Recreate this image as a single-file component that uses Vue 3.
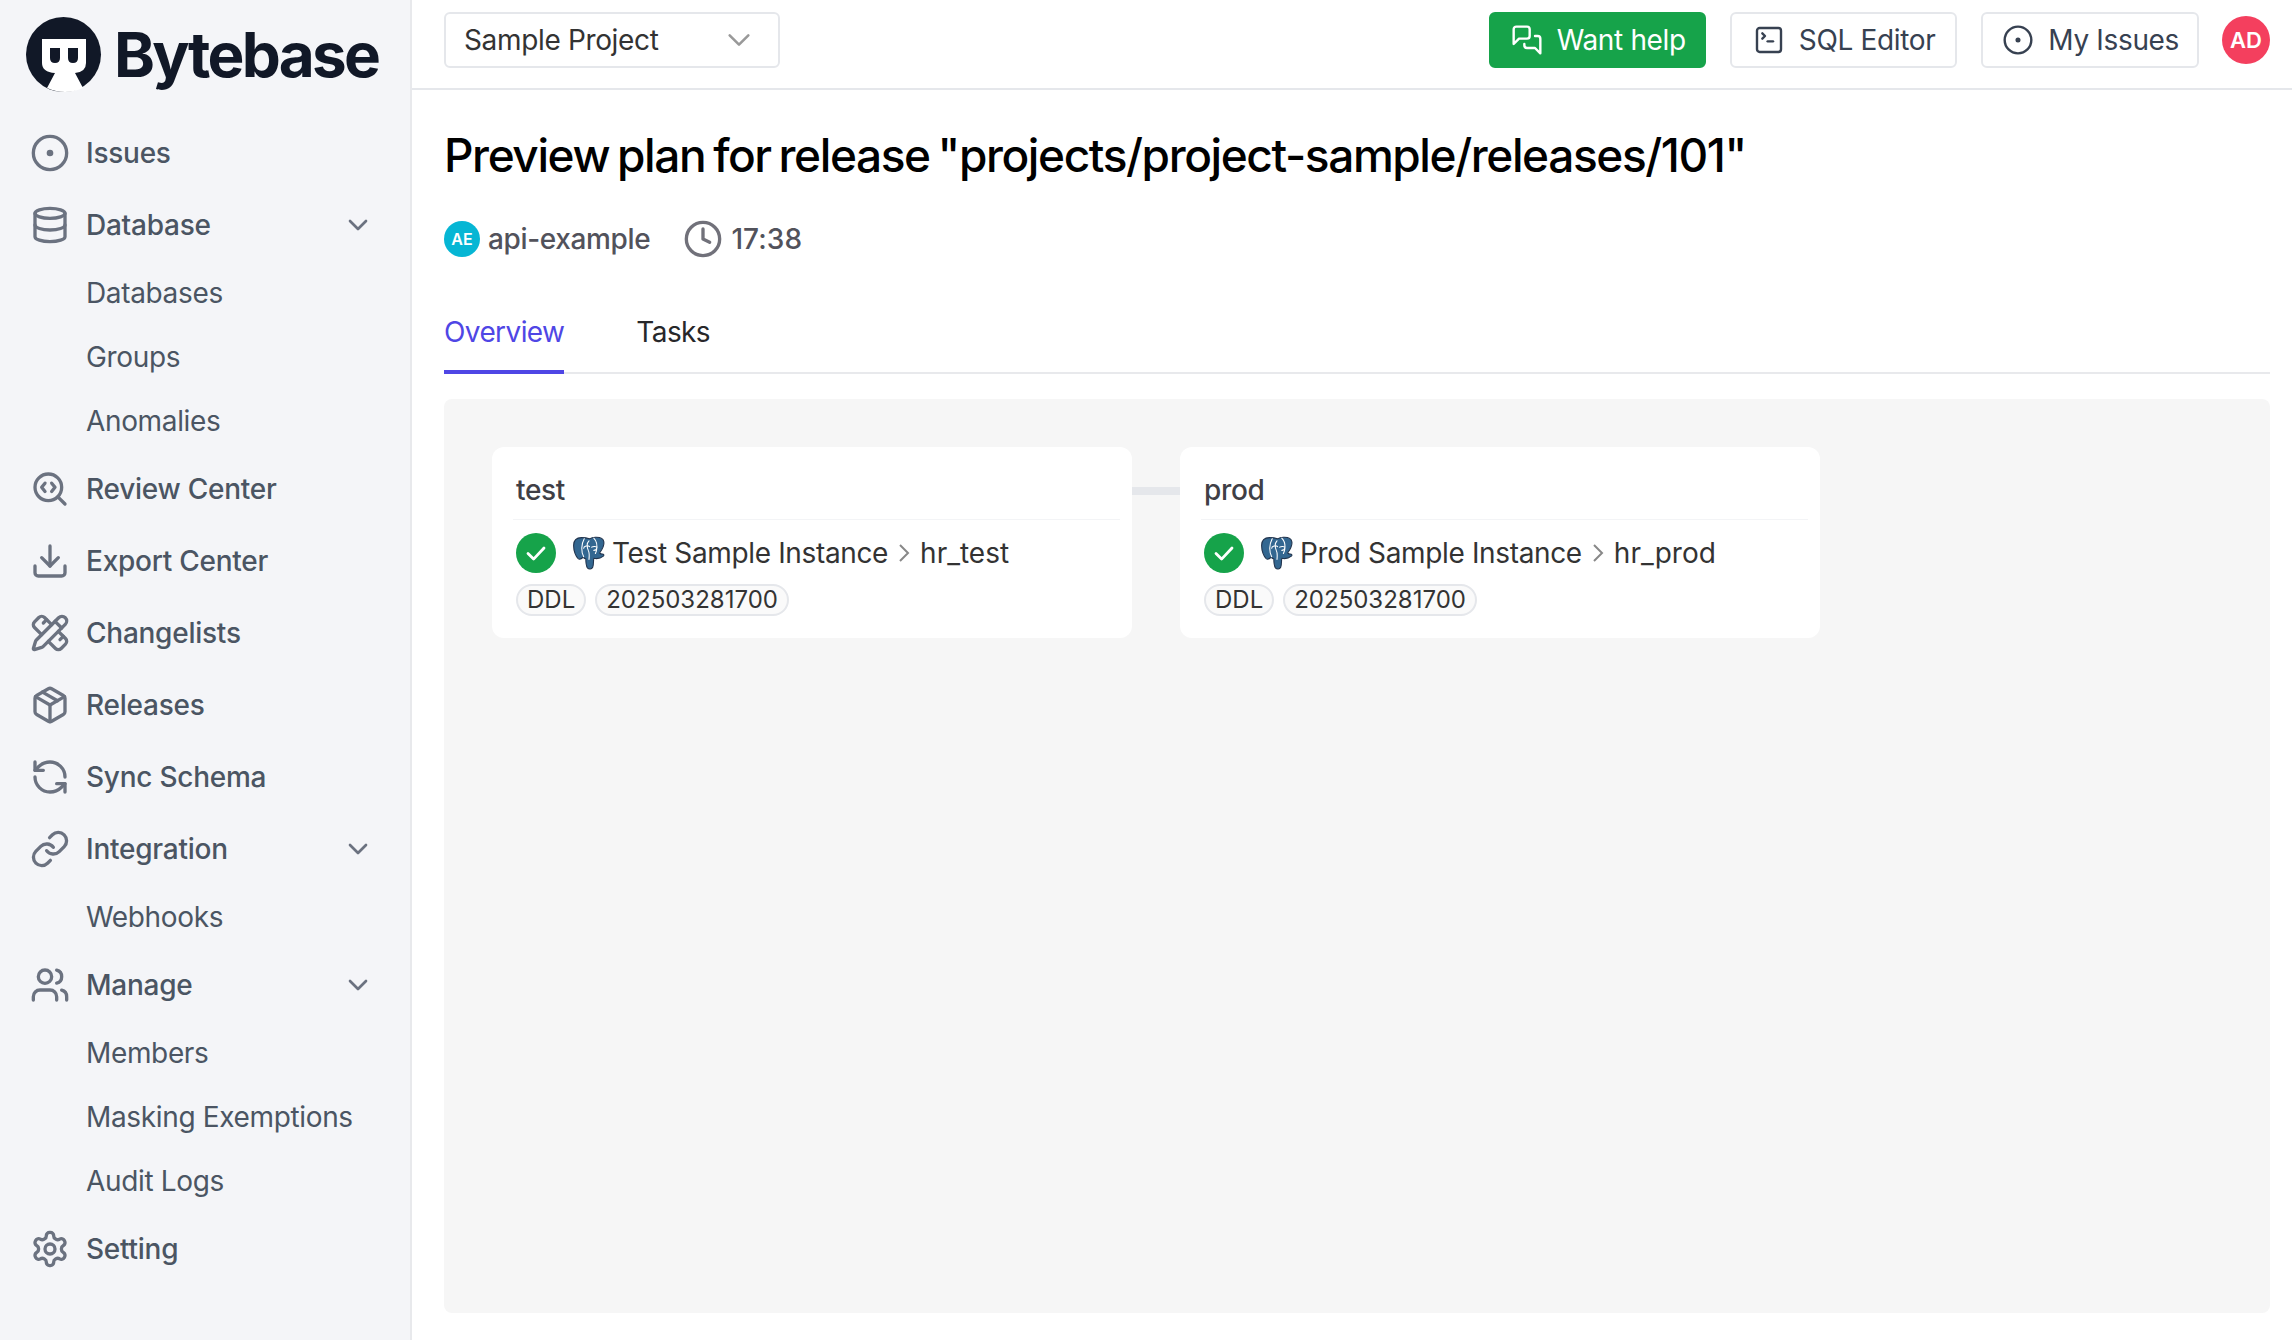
<template>
  <div class="app">
    <aside class="sidebar">
      <div class="logo">
        <svg class="logo-mark" viewBox="26 18 76 76" width="76" height="76">
          <circle cx="63.5" cy="55.5" r="37.5" fill="#111827" />
          <path d="M42 40h44v24q0 9-11 10l8 15q-18 8-36 0l8-15q-13-1-13-10z" fill="#fff" />
          <path d="M50 49h10v10q0 5-5 5t-5-5zM68 49h10v10q0 5-5 5t-5-5z" fill="#111827" />
        </svg>
        <span class="logo-text">Bytebase</span>
      </div>
      <nav>
        <template v-for="item in nav" :key="item.label">
          <div v-if="item.sub" class="nav-sub">{{ item.label }}</div>
          <div v-else class="nav-main">
            <svg class="nav-icon" viewBox="0 0 24 24" v-html="icons[item.icon]"></svg>
            <span class="nav-label">{{ item.label }}</span>
            <svg v-if="item.open" class="nav-caret" viewBox="0 0 24 24"><path d="m6 9 6 6 6-6" /></svg>
          </div>
        </template>
      </nav>
    </aside>

    <div class="main">
      <header class="topbar">
        <div class="project-select">
          <span>Sample Project</span>
          <svg class="select-caret" viewBox="0 0 24 24"><path d="m4 8 8 8 8-8" /></svg>
        </div>
        <div class="top-actions">
          <button class="btn btn-green">
            <svg class="btn-icon" viewBox="0 0 24 24" v-html="icons.help"></svg>Want help
          </button>
          <button class="btn btn-sql">
            <svg class="btn-icon" viewBox="0 0 24 24" v-html="icons.terminal"></svg>SQL Editor
          </button>
          <button class="btn btn-issues">
            <svg class="btn-icon" viewBox="0 0 24 24" v-html="icons.issues"></svg>My Issues
          </button>
          <div class="avatar-ad">AD</div>
        </div>
      </header>

      <section class="content">
        <h1>Preview plan for release "projects/project-sample/releases/101"</h1>
        <div class="meta">
          <span class="avatar-ae">AE</span>
          <span class="meta-name">api-example</span>
          <svg class="clock" viewBox="0 0 24 24" v-html="icons.clock"></svg>
          <span class="meta-time">17:38</span>
        </div>
        <div class="tabs">
          <div class="tab active">Overview</div>
          <div class="tab">Tasks</div>
        </div>
        <div class="canvas">
          <template v-for="(stage, i) in stages" :key="stage.name">
            <div v-if="i > 0" class="connector"></div>
            <div class="card">
              <div class="card-title">{{ stage.name }}</div>
              <div class="task-row">
                <svg class="check" viewBox="0 0 40 40">
                  <circle cx="20" cy="20" r="20" fill="#16a34a" />
                  <path d="m12 20.5 5.6 5.6L28 15" fill="none" stroke="#fff" stroke-width="2.8" stroke-linecap="round" stroke-linejoin="round" />
                </svg>
                <svg class="pg" viewBox="0 0 32 32">
                  <path d="M9 1.500C4 1.500 1.500 4.500 1.500 9c0 5 2 10.500 4.500 12.500 1.500 1 3 0 4.500-1.500 1 1 2 1.500 2.500 1.500 0 3.500.2 6.500 1.500 8.500 1.300 1.500 4 1.500 5-.5 1-2.500.5-5.500 1-8.500 2.500.5 6.500 0 9-2 1-1 .5-2-1-2-1 0-2-.5-2.500-1 2.500-3.500 4.500-7.500 4-10.500C29.500 2.500 26 1 22 1.200c-2 .1-4 .6-5.500 1.500C14.500 2 12 1.500 9 1.500z" fill="#336791" stroke="#22344d" stroke-width="1" stroke-linejoin="round" />
                  <path d="M11.500 2.500C8.500 8 8.500 15 11 19.500M11 11.500c0-2 4-3 5.500-1.500M16 4.500c-3 3-2 6-.5 9.500 1 2 .8 5 .5 8M20.500 2c3 3 3.500 7.500 2.500 12l-1 2.500M18.500 10.500c1.500-1 4.500-1 5 .5-.2 1.500-1 2.500-3 2.500" fill="none" stroke="#fff" stroke-width="1" stroke-linecap="round" />
                </svg>
                <span class="instance">{{ stage.instance }}</span>
                <svg class="crumb" viewBox="0 0 12 20"><path d="m2 2 8 8-8 8" /></svg>
                <span class="db">{{ stage.db }}</span>
              </div>
              <div class="chips">
                <span class="chip">DDL</span>
                <span class="chip">202503281700</span>
              </div>
            </div>
          </template>
        </div>
      </section>
    </div>
  </div>
</template>

<script setup>
const issuesIcon = '<circle cx="12" cy="12" r="10"/><circle cx="12" cy="12" r="1"/>'

const icons = {
  issues: issuesIcon,
  database: '<ellipse cx="12" cy="5" rx="9" ry="3"/><path d="M3 5v14a9 3 0 0 0 18 0V5"/><path d="M3 12a9 3 0 0 0 18 0"/>',
  review: '<path d="m13 13.500 2-2.500-2-2.500"/><path d="m21 21-4.300-4.300"/><path d="M9 8.500 7 11l2 2.500"/><circle cx="11" cy="11" r="8"/>',
  export: '<path d="M21 15v4a2 2 0 0 1-2 2H5a2 2 0 0 1-2-2v-4"/><path d="m7 10 5 5 5-5"/><path d="M12 15V3"/>',
  changelist: '<path d="M13 7 8.700 2.700a2.410 2.410 0 0 0-3.400 0L2.700 5.300a2.410 2.410 0 0 0 0 3.400L7 13"/><path d="m8 6 2-2"/><path d="m18 16 2-2"/><path d="m17 11 4.300 4.300c.94.94.94 2.460 0 3.400l-2.600 2.600c-.94.94-2.460.94-3.400 0L11 17"/><path d="M21.174 6.812a1 1 0 0 0-3.986-3.987L3.842 16.174a2 2 0 0 0-.5.83l-1.321 4.352a.5.5 0 0 0 .623.622l4.353-1.320a2 2 0 0 0 .83-.497z"/><path d="m15 5 4 4"/>',
  release: '<path d="m7.500 4.270 9 5.150"/><path d="M21 8a2 2 0 0 0-1-1.730l-7-4a2 2 0 0 0-2 0l-7 4A2 2 0 0 0 3 8v8a2 2 0 0 0 1 1.730l7 4a2 2 0 0 0 2 0l7-4A2 2 0 0 0 21 16Z"/><path d="m3.300 7 8.700 5 8.700-5"/><path d="M12 22V12"/>',
  sync: '<path d="M21 12a9 9 0 0 0-9-9 9.750 9.750 0 0 0-6.740 2.740L3 8"/><path d="M3 3v5h5"/><path d="M3 12a9 9 0 0 0 9 9 9.750 9.750 0 0 0 6.740-2.740L21 16"/><path d="M16 16h5v5"/>',
  link: '<path d="M10 13a5 5 0 0 0 7.540.54l3-3a5 5 0 0 0-7.070-7.070l-1.720 1.710"/><path d="M14 11a5 5 0 0 0-7.540-.54l-3 3a5 5 0 0 0 7.070 7.070l1.710-1.710"/>',
  users: '<path d="M16 21v-2a4 4 0 0 0-4-4H6a4 4 0 0 0-4 4v2"/><circle cx="9" cy="7" r="4"/><path d="M22 21v-2a4 4 0 0 0-3-3.870"/><path d="M16 3.130a4 4 0 0 1 0 7.750"/>',
  setting: '<path d="M12.220 2h-.44a2 2 0 0 0-2 2v.18a2 2 0 0 1-1 1.730l-.43.25a2 2 0 0 1-2 0l-.15-.08a2 2 0 0 0-2.730.73l-.22.38a2 2 0 0 0 .73 2.730l.15.1a2 2 0 0 1 1 1.720v.51a2 2 0 0 1-1 1.740l-.15.09a2 2 0 0 0-.73 2.730l.22.38a2 2 0 0 0 2.730.73l.15-.08a2 2 0 0 1 2 0l.43.25a2 2 0 0 1 1 1.730V20a2 2 0 0 0 2 2h.44a2 2 0 0 0 2-2v-.18a2 2 0 0 1 1-1.730l.43-.25a2 2 0 0 1 2 0l.15.08a2 2 0 0 0 2.730-.73l.22-.39a2 2 0 0 0-.73-2.730l-.15-.08a2 2 0 0 1-1-1.740v-.5a2 2 0 0 1 1-1.740l.15-.09a2 2 0 0 0 .73-2.730l-.22-.38a2 2 0 0 0-2.730-.73l-.15.08a2 2 0 0 1-2 0l-.43-.25a2 2 0 0 1-1-1.730V4a2 2 0 0 0-2-2z"/><circle cx="12" cy="12" r="3"/>',
  help: '<path d="M14 9a2 2 0 0 1-2 2H6l-4 4V4c0-1.100.9-2 2-2h8a2 2 0 0 1 2 2v5Z"/><path d="M18 9h2a2 2 0 0 1 2 2v11l-4-4h-6a2 2 0 0 1-2-2v-1"/>',
  terminal: '<path d="m7 11 2-2-2-2"/><path d="M11 13h4"/><rect x="3" y="3" width="18" height="18" rx="2"/>',
  clock: '<circle cx="12" cy="12" r="10"/><path d="M12 6v6l4 2"/>'
}

const nav = [
  { label: 'Issues', icon: 'issues' },
  { label: 'Database', icon: 'database', open: true },
  { label: 'Databases', sub: true },
  { label: 'Groups', sub: true },
  { label: 'Anomalies', sub: true },
  { label: 'Review Center', icon: 'review' },
  { label: 'Export Center', icon: 'export' },
  { label: 'Changelists', icon: 'changelist' },
  { label: 'Releases', icon: 'release' },
  { label: 'Sync Schema', icon: 'sync' },
  { label: 'Integration', icon: 'link', open: true },
  { label: 'Webhooks', sub: true },
  { label: 'Manage', icon: 'users', open: true },
  { label: 'Members', sub: true },
  { label: 'Masking Exemptions', sub: true },
  { label: 'Audit Logs', sub: true },
  { label: 'Setting', icon: 'setting' }
]

const stages = [
  { name: 'test', instance: 'Test Sample Instance', db: 'hr_test' },
  { name: 'prod', instance: 'Prod Sample Instance', db: 'hr_prod' }
]
</script>

<style>
html, body { margin: 0; background: #fff; overflow: hidden; }
</style>

<style scoped>
.app {
  display: flex;
  width: 2292px;
  height: 1340px;
  font-family: Inter, "Liberation Sans", sans-serif;
  font-size: 28px;
  letter-spacing: -.35px;
  color: #374151;
  overflow: hidden;
}

.sidebar {
  width: 410px;
  flex-shrink: 0;
  background: #f4f5f8;
  border-right: 2px solid #e8e9ec;
}
.logo { display: flex; align-items: center; height: 117px; padding: 0 0 7px 26px; box-sizing: border-box; gap: 12px; }
.logo-mark { flex-shrink: 0; }
.logo-text { font-size: 62px; font-weight: 700; color: #111827; letter-spacing: -2.700px; line-height: 1; }

.nav-main { display: flex; align-items: center; height: 72px; padding-left: 30px; font-weight: 500; letter-spacing: -.25px; color: #4b5563; }
.nav-icon { width: 40px; height: 40px; margin-top: -1px; fill: none; stroke: #6b7280; stroke-width: 2; stroke-linecap: round; stroke-linejoin: round; flex-shrink: 0; }
.nav-label { margin-left: 16px; flex: 1; }
.nav-caret { width: 32px; height: 32px; margin-right: 36px; fill: none; stroke: #6b7280; stroke-width: 2; stroke-linecap: round; stroke-linejoin: round; }
.nav-sub { height: 64px; line-height: 64px; padding-left: 86px; color: #4b5563; }

.main { flex: 1; min-width: 0; }
.topbar { display: flex; align-items: center; justify-content: space-between; height: 90px; padding: 0 22px 8px 32px; box-sizing: border-box; border-bottom: 2px solid #e5e7eb; }
.project-select { display: flex; align-items: center; justify-content: space-between; width: 336px; height: 56px; padding: 0 25px 0 18px; box-sizing: border-box; border: 2px solid #e5e7eb; border-radius: 6px; color: #333; }
.select-caret { width: 28px; height: 28px; fill: none; stroke: #999; stroke-width: 2.200; stroke-linecap: round; stroke-linejoin: round; }

.top-actions { display: flex; align-items: center; }
.btn { display: flex; align-items: center; gap: 14px; height: 56px; padding: 0 20px; margin-right: 24px; box-sizing: border-box; border: 2px solid #e5e7eb; border-radius: 6px; background: #fff; color: #374151; font: inherit; letter-spacing: inherit; }
.btn-green { background: #16a34a; border-color: #16a34a; color: #fff; padding: 0 18px 0 20px; }
.btn-sql { padding-left: 21px; }
.btn-issues { padding: 0 18px 0 19px; }
.btn-icon { width: 32px; height: 32px; fill: none; stroke: currentColor; stroke-width: 1.800; stroke-linecap: round; stroke-linejoin: round; }
.avatar-ad { width: 48px; height: 48px; margin-left: -1px; border-radius: 50%; background: #f43f5e; color: #fff; font-size: 22px; font-weight: 600; letter-spacing: 0; display: flex; align-items: center; justify-content: center; }

.content { padding: 0 22px 0 32px; }
h1 { margin: 0; padding-top: 37px; font-size: 46px; font-weight: 450; line-height: 56px; color: #000; letter-spacing: -1.400px; word-spacing: -3px; }
.meta { display: flex; align-items: center; height: 40px; margin-top: 36px; color: #52525b; }
.avatar-ae { width: 36px; height: 36px; border-radius: 50%; background: #06b6d4; color: #fff; font-size: 16px; font-weight: 600; letter-spacing: 0; display: flex; align-items: center; justify-content: center; }
.meta-name { margin-left: 8px; font-weight: 500; }
.clock { width: 40px; height: 40px; margin-left: 33px; fill: none; stroke: #71717a; stroke-width: 2; stroke-linecap: round; stroke-linejoin: round; }
.meta-time { margin-left: 8px; font-weight: 500; letter-spacing: .1px; }

.tabs { display: flex; gap: 72px; height: 87px; margin-top: 28px; box-sizing: border-box; border-bottom: 2px solid #e8e9ec; }
.tab { height: 87px; padding-top: 28px; line-height: 34px; box-sizing: border-box; color: #27272a; letter-spacing: -.6px; }
.tab.active { color: #4f46e5; border-bottom: 4px solid #4f46e5; }

.canvas { display: flex; align-items: flex-start; height: 914px; margin-top: 25px; padding: 48px; box-sizing: border-box; background: #f6f6f6; border-radius: 8px; }
.card { width: 640px; height: 191px; padding: 0 12px 0 24px; box-sizing: border-box; background: #fff; border-radius: 12px; }
.connector { width: 48px; height: 8px; margin-top: 40px; background: #e5e7eb; }
.card-title { height: 73px; line-height: 86px; font-weight: 500; color: #3f3f46; box-sizing: border-box; border-bottom: 1px solid #f3f4f6; margin-left: -3px; padding-left: 3px; }
.task-row { display: flex; align-items: center; height: 40px; margin-top: 13px; color: #333; }
.check { width: 40px; height: 40px; flex-shrink: 0; }
.pg { width: 34px; height: 34px; margin-left: 16px; flex-shrink: 0; }
.instance { margin-left: 6px; }
.crumb { width: 12px; height: 20px; margin: 0 10px; fill: none; stroke: #888; stroke-width: 2; }
.db { letter-spacing: 0; }
.chips { display: flex; gap: 9px; margin-top: 11px; }
.chip { height: 32px; line-height: 28px; padding: 0 9px; box-sizing: border-box; border: 2px solid #e5e7eb; border-radius: 16px; background: #fafafa; font-size: 24px; letter-spacing: 0; color: #333; }
</style>
